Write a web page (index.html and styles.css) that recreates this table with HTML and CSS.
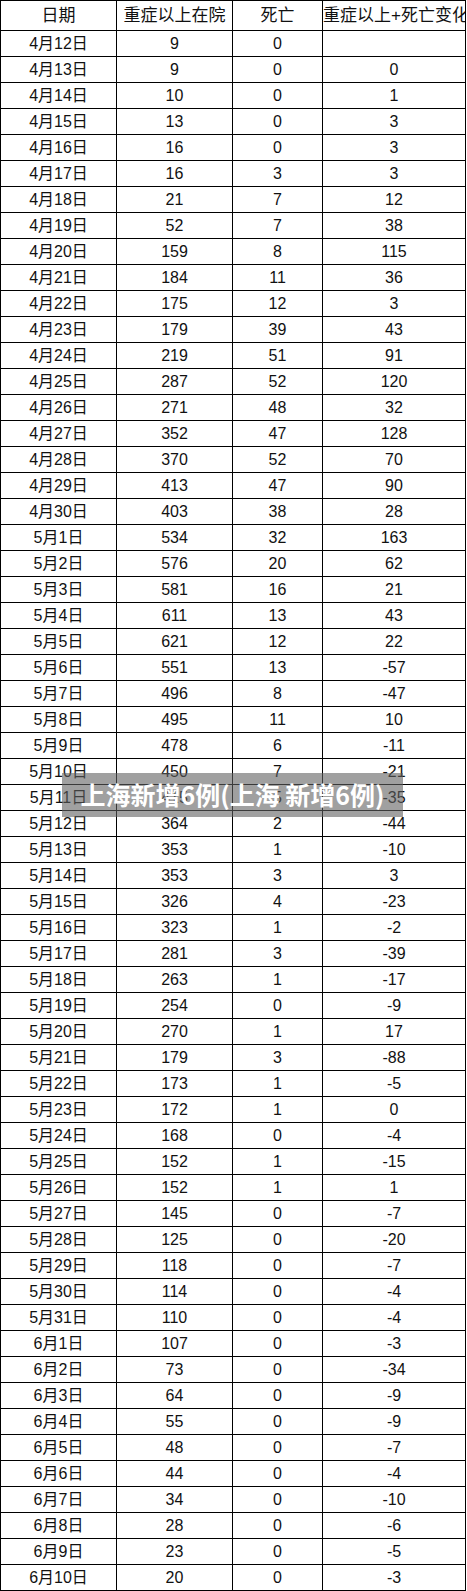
FILE: index.html
```html
<!DOCTYPE html>
<html lang="zh-CN">
<head>
<meta charset="utf-8">
<title>上海新增6例</title>
<link rel="stylesheet" href="styles.css">
</head>
<body>
<div class="sheet">
<table class="grid">
<colgroup><col class="c1"><col class="c2"><col class="c3"><col class="c4"></colgroup>
<thead>
<tr class="head"><th>日期</th><th>重症以上在院</th><th>死亡</th><th class="wide">重症以上+死亡变化</th></tr>
</thead>
<tbody>
<tr><td>4月12日</td><td>9</td><td>0</td><td></td></tr>
<tr><td>4月13日</td><td>9</td><td>0</td><td>0</td></tr>
<tr><td>4月14日</td><td>10</td><td>0</td><td>1</td></tr>
<tr><td>4月15日</td><td>13</td><td>0</td><td>3</td></tr>
<tr><td>4月16日</td><td>16</td><td>0</td><td>3</td></tr>
<tr><td>4月17日</td><td>16</td><td>3</td><td>3</td></tr>
<tr><td>4月18日</td><td>21</td><td>7</td><td>12</td></tr>
<tr><td>4月19日</td><td>52</td><td>7</td><td>38</td></tr>
<tr><td>4月20日</td><td>159</td><td>8</td><td>115</td></tr>
<tr><td>4月21日</td><td>184</td><td>11</td><td>36</td></tr>
<tr><td>4月22日</td><td>175</td><td>12</td><td>3</td></tr>
<tr><td>4月23日</td><td>179</td><td>39</td><td>43</td></tr>
<tr><td>4月24日</td><td>219</td><td>51</td><td>91</td></tr>
<tr><td>4月25日</td><td>287</td><td>52</td><td>120</td></tr>
<tr><td>4月26日</td><td>271</td><td>48</td><td>32</td></tr>
<tr><td>4月27日</td><td>352</td><td>47</td><td>128</td></tr>
<tr><td>4月28日</td><td>370</td><td>52</td><td>70</td></tr>
<tr><td>4月29日</td><td>413</td><td>47</td><td>90</td></tr>
<tr><td>4月30日</td><td>403</td><td>38</td><td>28</td></tr>
<tr><td>5月1日</td><td>534</td><td>32</td><td>163</td></tr>
<tr><td>5月2日</td><td>576</td><td>20</td><td>62</td></tr>
<tr><td>5月3日</td><td>581</td><td>16</td><td>21</td></tr>
<tr><td>5月4日</td><td>611</td><td>13</td><td>43</td></tr>
<tr><td>5月5日</td><td>621</td><td>12</td><td>22</td></tr>
<tr><td>5月6日</td><td>551</td><td>13</td><td>-57</td></tr>
<tr><td>5月7日</td><td>496</td><td>8</td><td>-47</td></tr>
<tr><td>5月8日</td><td>495</td><td>11</td><td>10</td></tr>
<tr><td>5月9日</td><td>478</td><td>6</td><td>-11</td></tr>
<tr><td>5月10日</td><td>450</td><td>7</td><td>-21</td></tr>
<tr><td>5月11日</td><td>415</td><td>5</td><td>-35</td></tr>
<tr><td>5月12日</td><td>364</td><td>2</td><td>-44</td></tr>
<tr><td>5月13日</td><td>353</td><td>1</td><td>-10</td></tr>
<tr><td>5月14日</td><td>353</td><td>3</td><td>3</td></tr>
<tr><td>5月15日</td><td>326</td><td>4</td><td>-23</td></tr>
<tr><td>5月16日</td><td>323</td><td>1</td><td>-2</td></tr>
<tr><td>5月17日</td><td>281</td><td>3</td><td>-39</td></tr>
<tr><td>5月18日</td><td>263</td><td>1</td><td>-17</td></tr>
<tr><td>5月19日</td><td>254</td><td>0</td><td>-9</td></tr>
<tr><td>5月20日</td><td>270</td><td>1</td><td>17</td></tr>
<tr><td>5月21日</td><td>179</td><td>3</td><td>-88</td></tr>
<tr><td>5月22日</td><td>173</td><td>1</td><td>-5</td></tr>
<tr><td>5月23日</td><td>172</td><td>1</td><td>0</td></tr>
<tr><td>5月24日</td><td>168</td><td>0</td><td>-4</td></tr>
<tr><td>5月25日</td><td>152</td><td>1</td><td>-15</td></tr>
<tr><td>5月26日</td><td>152</td><td>1</td><td>1</td></tr>
<tr><td>5月27日</td><td>145</td><td>0</td><td>-7</td></tr>
<tr><td>5月28日</td><td>125</td><td>0</td><td>-20</td></tr>
<tr><td>5月29日</td><td>118</td><td>0</td><td>-7</td></tr>
<tr><td>5月30日</td><td>114</td><td>0</td><td>-4</td></tr>
<tr><td>5月31日</td><td>110</td><td>0</td><td>-4</td></tr>
<tr><td>6月1日</td><td>107</td><td>0</td><td>-3</td></tr>
<tr><td>6月2日</td><td>73</td><td>0</td><td>-34</td></tr>
<tr><td>6月3日</td><td>64</td><td>0</td><td>-9</td></tr>
<tr><td>6月4日</td><td>55</td><td>0</td><td>-9</td></tr>
<tr><td>6月5日</td><td>48</td><td>0</td><td>-7</td></tr>
<tr><td>6月6日</td><td>44</td><td>0</td><td>-4</td></tr>
<tr><td>6月7日</td><td>34</td><td>0</td><td>-10</td></tr>
<tr><td>6月8日</td><td>28</td><td>0</td><td>-6</td></tr>
<tr><td>6月9日</td><td>23</td><td>0</td><td>-5</td></tr>
<tr><td>6月10日</td><td>20</td><td>0</td><td>-3</td></tr>
</tbody>
</table>
<div class="banner">上海新增6例(上海 新增6例)</div>
</div>
</body>
</html>
```

FILE: styles.css
```css
html, body {
  margin: 0;
  padding: 0;
  background: #fff;
}

.sheet {
  position: relative;
  width: 467px;
}

.grid {
  border-collapse: separate;
  border-spacing: 1px;
  background: #000;
  table-layout: fixed;
  width: 466px;
  font-family: "Liberation Sans", "Noto Sans CJK SC", sans-serif;
  font-size: 16px;
  color: #111;
}

.c1 { width: 115px; }
.c2 { width: 115px; }
.c3 { width: 89px; }
.c4 { width: 142px; }

.grid th,
.grid td {
  background: #fff;
  padding: 0;
  text-align: center;
  vertical-align: middle;
  white-space: nowrap;
  overflow: hidden;
  line-height: 25px;
  height: 25px;
}

.grid th {
  font-weight: normal;
  font-size: 17px;
  height: 29px;
  line-height: 29px;
}

.grid th.wide {
  text-align: left;
}

.banner {
  position: absolute;
  left: 62px;
  top: 773px;
  width: 341px;
  height: 44px;
  background: rgba(96, 96, 96, 0.6);
  color: #fff;
  font-family: "Noto Sans CJK SC", "Liberation Sans", sans-serif;
  font-weight: bold;
  font-size: 25px;
  line-height: 42px;
  text-align: center;
  white-space: nowrap;
}
```
